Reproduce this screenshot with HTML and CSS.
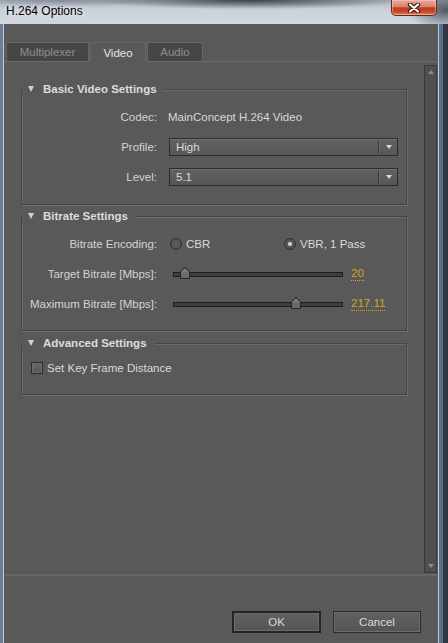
FILE: index.html
```html
<!DOCTYPE html>
<html>
<head>
<meta charset="utf-8">
<title>H.264 Options</title>
<link rel="stylesheet" href="styles.css">
</head>
<body>
<div class="window">
  <div class="titlebar">
    <span class="title">H.264 Options</span>
    <div class="close">
      <svg width="14" height="10" viewBox="0 0 14 10">
        <path d="M3 1.5 L11 8.5 M11 1.5 L3 8.5" stroke="#3b1a14" stroke-width="4.4" stroke-linecap="round"/>
        <path d="M3 1.5 L11 8.5 M11 1.5 L3 8.5" stroke="#ffffff" stroke-width="2.2" stroke-linecap="round"/>
      </svg>
    </div>
  </div>
  <div class="frame">
    <div class="edge-left"></div>
    <div class="client">
      <div class="tabs">
        <div class="tab mux">Multiplexer</div>
        <div class="tab video active">Video</div>
        <div class="tab audio">Audio</div>
      </div>
      <div class="scrollarea">
        <div class="content">
          <section class="group">
            <div class="head"><span class="tri"></span>Basic Video Settings</div>
            <div class="rows">
              <div class="label">Codec:</div>
              <div class="value">MainConcept H.264 Video</div>
              <div class="label">Profile:</div>
              <div class="select"><span class="sel-val">High</span><span class="sel-sep"></span><span class="caret"></span></div>
              <div class="label">Level:</div>
              <div class="select"><span class="sel-val">5.1</span><span class="sel-sep"></span><span class="caret"></span></div>
            </div>
          </section>
          <section class="group">
            <div class="head"><span class="tri"></span>Bitrate Settings</div>
            <div class="rows bitrate">
              <div class="label">Bitrate Encoding:</div>
              <div class="radios">
                <div class="opt first"><span class="radio"></span>CBR</div>
                <div class="opt"><span class="radio on"></span>VBR, 1 Pass</div>
              </div>
              <div class="label">Target Bitrate [Mbps]:</div>
              <div class="slider">
                <div class="track">
                  <svg class="thumb" style="left:6px" width="10" height="12" viewBox="0 0 10 12"><path d="M5 0.5 L9.5 4.5 L9.5 11.5 L0.5 11.5 L0.5 4.5 Z" fill="#6a6a6a" stroke="#262626"/><path d="M5 1.8 L8.5 4.9 L8.5 5.5 L1.5 5.5 L1.5 4.9 Z" fill="#7d7d7d"/></svg>
                </div>
                <span class="num">20</span>
              </div>
              <div class="label">Maximum Bitrate [Mbps]:</div>
              <div class="slider">
                <div class="track">
                  <svg class="thumb" style="left:117px" width="10" height="12" viewBox="0 0 10 12"><path d="M5 0.5 L9.5 4.5 L9.5 11.5 L0.5 11.5 L0.5 4.5 Z" fill="#6a6a6a" stroke="#262626"/><path d="M5 1.8 L8.5 4.9 L8.5 5.5 L1.5 5.5 L1.5 4.9 Z" fill="#7d7d7d"/></svg>
                </div>
                <span class="num">217.11</span>
              </div>
            </div>
          </section>
          <section class="group advanced">
            <div class="head"><span class="tri"></span>Advanced Settings</div>
            <div class="check-row">
              <span class="checkbox"></span>
              <span class="value">Set Key Frame Distance</span>
            </div>
          </section>
        </div>
        <div class="scrollbar">
          <span class="arrow up"></span>
          <span class="arrow down"></span>
        </div>
      </div>
      <div class="footer">
        <button class="btn default">OK</button>
        <button class="btn cancel">Cancel</button>
      </div>
    </div>
    <div class="edge-right"></div>
  </div>
</div>
</body>
</html>
```

FILE: styles.css
```css
* { box-sizing: border-box; }
html, body { margin: 0; padding: 0; }
body {
  width: 448px;
  height: 643px;
  overflow: hidden;
  font-family: "Liberation Sans", Arial, sans-serif;
  font-size: 11.5px;
  background: #2e353e;
}
.window {
  width: 448px;
  height: 643px;
  display: flex;
  flex-direction: column;
}
.titlebar {
  height: 24px;
  flex: none;
  display: flex;
  justify-content: space-between;
  align-items: flex-start;
  background:
    radial-gradient(ellipse 160px 9px at 250px 0, rgba(42,52,64,.9), rgba(42,52,64,0)),
    radial-gradient(ellipse 110px 7px at 60px 0, rgba(95,105,115,.55), rgba(95,105,115,0)),
    radial-gradient(ellipse 40px 20px at 446px 10px, rgba(50,58,68,.8), rgba(50,58,68,0)),
    linear-gradient(#aeb7c1, #cbd2d9 45%, #d2d8de);
}
.title {
  margin: 4px 0 0 6px;
  font-size: 12px;
  line-height: 14px;
  color: #000;
  text-shadow: 0 0 5px rgba(255,255,255,.9);
}
.close {
  width: 46px;
  height: 16px;
  margin-right: 11px;
  border: 1px solid #5e2a22;
  border-top: none;
  border-radius: 0 0 5px 5px;
  background: linear-gradient(#e9ab9c 0, #d8816d 45%, #c23a1f 52%, #c84a2a 80%, #de8a5c 100%);
  box-shadow: inset 0 0 0 1px rgba(255,215,205,.45);
  display: flex;
  align-items: center;
  justify-content: center;
}
.frame {
  flex: 1;
  display: flex;
  min-height: 0;
}
.edge-left {
  width: 4px;
  flex: none;
  background: linear-gradient(to right, #6b7f96 0, #6b7f96 3px, #c3ccd6 3px);
}
.edge-right {
  width: 11px;
  flex: none;
  background: linear-gradient(to right, #5a5a5a 0, #5a5a5a 1px, #c0c9d3 1px, #c0c9d3 2px, #55708f 2px, #55708f 6px, #2f3640 6px);
}
.client {
  width: 433px;
  flex: none;
  background: #595959;
  display: flex;
  flex-direction: column;
}

/* tabs */
.tabs {
  margin-top: 18px;
  height: 20px;
  flex: none;
  display: flex;
  align-items: flex-end;
  gap: 1px;
  padding-left: 2px;
  border-bottom: 1px solid #6a6a6a;
}
.tab {
  height: 19px;
  display: flex;
  align-items: center;
  justify-content: center;
  background: #464646;
  border: 1px solid #676767;
  border-bottom: none;
  color: #8e8e8e;
}
.tab.mux { width: 83px; }
.tab.video { width: 56px; }
.tab.audio { width: 56px; }
.tab.active {
  height: 20px;
  margin-bottom: -1px;
  background: #595959;
  color: #e6e6e6;
}

/* scroll area */
.scrollarea {
  height: 512px;
  flex: none;
  display: flex;
}
.content {
  flex: 1;
  padding-top: 27px;
  display: flex;
  flex-direction: column;
  gap: 11px;
}
.group {
  margin: 0 17px;
  border: 1px solid #454545;
  box-shadow: 1px 1px 0 #6b6b6b, inset 1px 1px 0 #6b6b6b;
}
.group.advanced { margin-top: 1px; }
.head {
  display: flex;
  align-items: center;
  width: fit-content;
  height: 14px;
  margin-top: -8px;
  padding: 0 7px 0 6px;
  background: #595959;
  font-weight: bold;
  color: #dcdcdc;
}
.tri {
  width: 0;
  height: 0;
  border-left: 3.5px solid transparent;
  border-right: 3.5px solid transparent;
  border-top: 6px solid #d0d0d0;
  margin-right: 9px;
}
.rows {
  display: grid;
  grid-template-columns: 127px 1fr;
  grid-auto-rows: 20px;
  column-gap: 11px;
  row-gap: 10px;
  align-items: center;
  padding: 11px 8px 17px 8px;
}
.rows.bitrate { padding-bottom: 16px; }
.label {
  text-align: right;
  color: #d3d3d3;
  white-space: nowrap;
}
.value {
  color: #d8d8d8;
  white-space: nowrap;
}

/* dropdown */
.select {
  margin-left: 1px;
  width: 229px;
  height: 18px;
  border: 1px solid #2c2c2c;
  background: linear-gradient(#626262, #565656);
  box-shadow: inset 0 1px 0 #707070;
  display: flex;
  align-items: center;
}
.sel-val {
  flex: 1;
  padding-left: 6px;
  color: #dadada;
}
.sel-sep {
  width: 2px;
  height: 14px;
  border-left: 1px solid #3c3c3c;
  border-right: 1px solid #6a6a6a;
}
.caret {
  width: 0;
  height: 0;
  border-left: 3.5px solid transparent;
  border-right: 3.5px solid transparent;
  border-top: 4px solid #d6d6d6;
  margin: 0 5px 0 6px;
}

/* radios */
.radios {
  display: flex;
  align-items: center;
  padding-left: 2px;
  color: #d8d8d8;
}
.opt {
  display: flex;
  align-items: center;
  gap: 4px;
}
.opt.first { width: 114px; }
.radio {
  width: 12px;
  height: 12px;
  border-radius: 50%;
  border: 1px solid #2e2e2e;
  background: radial-gradient(circle at 50% 40%, #5d5d5d, #4c4c4c);
  box-shadow: 0 0 0 1px rgba(110,110,110,.35);
  display: flex;
  align-items: center;
  justify-content: center;
}
.radio.on::after {
  content: "";
  width: 4px;
  height: 4px;
  border-radius: 50%;
  background: #d6d6d6;
}

/* sliders */
.slider {
  display: flex;
  align-items: center;
}
.track {
  position: relative;
  width: 170px;
  height: 5px;
  margin-left: 5px;
  border: 1px solid #1e1e1e;
  background: #3e3e3e;
}
.thumb {
  position: absolute;
  top: -6px;
  display: block;
}
.num {
  margin-left: 8px;
  color: #d9a11e;
  line-height: 13px;
  border-bottom: 1px dotted #d9a11e;
}

/* checkbox */
.check-row {
  height: 20px;
  display: flex;
  align-items: center;
  gap: 4px;
  margin: 8px 0 16px 9px;
}
.checkbox {
  width: 12px;
  height: 12px;
  border: 1px solid #2b2b2b;
  background: linear-gradient(#666, #585858);
  box-shadow: inset 0 0 0 1px #6e6e6e;
}

/* scrollbar */
.scrollbar {
  width: 13px;
  flex: none;
  margin: 3px 0 1px;
  border: 1px solid #383838;
  background: #4f4f4f;
  display: flex;
  flex-direction: column;
  justify-content: space-between;
  align-items: center;
  padding: 4px 0 4px;
}
.arrow {
  width: 0;
  height: 0;
  border-left: 3.5px solid transparent;
  border-right: 3.5px solid transparent;
}
.arrow.up { border-bottom: 4px solid #8a8a8a; }
.arrow.down { border-top: 4px solid #8a8a8a; }

/* footer */
.footer {
  flex: 1;
  border-top: 2px solid #666666;
  display: flex;
  justify-content: flex-end;
  align-items: flex-start;
  gap: 12px;
  padding: 35px 16px 0 0;
}
.btn {
  height: 22px;
  padding: 0;
  font: inherit;
  color: #d9d9d9;
  background: linear-gradient(#606060, #555555);
  border: 1px solid #2c2c2c;
  box-shadow: inset 0 0 0 1px #6b6b6b;
}
.btn.default {
  width: 89px;
  border: 2px solid #242424;
}
.btn.cancel { width: 88px; }
```
